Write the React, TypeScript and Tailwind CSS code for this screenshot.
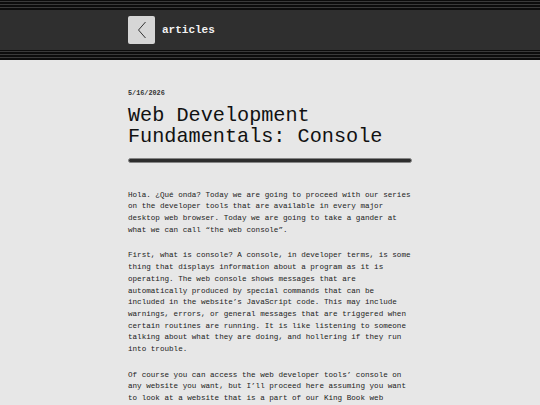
const mono = "font-['Liberation_Mono','DejaVu_Sans_Mono',monospace]";

function Stripes() {
  return (
    <div className="flex flex-col bg-[#0c0c0c] pt-[1px] pb-[2px] gap-[2px]">
      <div className="h-px bg-[#3a3a3a]" />
      <div className="h-px bg-[#3a3a3a]" />
      <div className="h-px bg-[#3a3a3a]" />
    </div>
  );
}

function Header() {
  return (
    <header className="flex flex-col">
      <Stripes />
      <div className="h-[40px] bg-[#2f2f2f] flex items-center pl-[128px] gap-[7px]">
        <button className="w-[27px] h-[28px] bg-[#d6d6d6] rounded-[2px] flex items-center justify-center">
          <svg width="10" height="18" viewBox="0 0 10 18" fill="none">
            <path d="M8.5 1 L1.5 9 L8.5 17" stroke="#333" strokeWidth="1" />
          </svg>
        </button>
        <span className={`${mono} text-[11px] font-bold text-[#f2f2f2]`}>articles</span>
      </div>
      <Stripes />
    </header>
  );
}

export default function App() {
  return (
    <div className={`min-h-screen bg-[#e7e7e7] ${mono} text-[#1a1a1a]`}>
      <Header />
      <main className="w-[284px] ml-[128px] pt-[30px]">
        <div className="text-[6.8px] font-bold text-[#333] leading-none">5/16/2026</div>
        <h1 className="mt-[8px] text-[20.2px] leading-[21px] text-[#111]">
          Web Development Fundamentals: Console
        </h1>
        <div className="mt-[11px] h-[5px] rounded-full bg-[#2e2e2e] border border-[#858585]" />
        <article className="mt-[27px] text-[7.6px] leading-[11.67px] text-[#222] flex flex-col gap-[14px]">
          <p>
            Hola. ¿Qué onda? Today we are going to proceed with our series on the developer tools that are available in every major desktop web browser. Today we are going to take a gander at what we can call “the web console”.
          </p>
          <p>
            First, what is console? A console, in developer terms, is some thing that displays information about a program as it is operating. The web console shows messages that are automatically produced by special commands that can be included in the website’s JavaScript code. This may include warnings, errors, or general messages that are triggered when certain routines are running. It is like listening to someone talking about what they are doing, and hollering if they run into trouble.
          </p>
          <p>
            Of course you can access the web developer tools’ console on any website you want, but I’ll proceed here assuming you want to look at a website that is a part of our King Book web development course.
          </p>
        </article>
      </main>
    </div>
  );
}
